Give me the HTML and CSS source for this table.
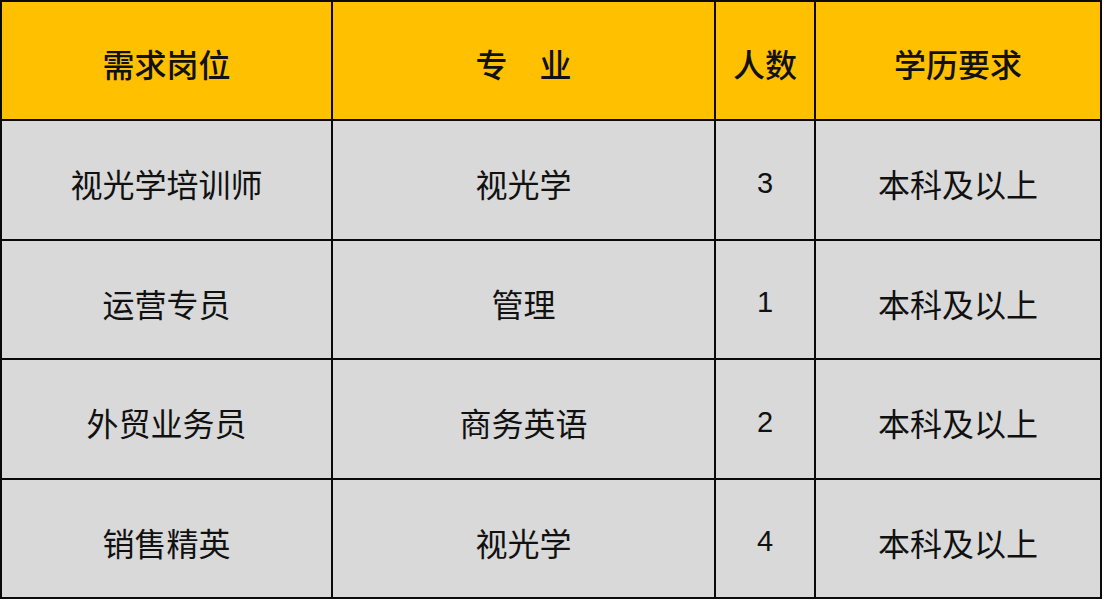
FILE: index.html
```html
<!DOCTYPE html>
<html lang="zh-CN">
<head>
<meta charset="utf-8">
<title>招聘岗位</title>
<link rel="stylesheet" href="styles.css">
</head>
<body>
<div class="table">
  <div class="cell head">需求岗位</div>
  <div class="cell head">专　业</div>
  <div class="cell head">人数</div>
  <div class="cell head">学历要求</div>

  <div class="cell">视光学培训师</div>
  <div class="cell">视光学</div>
  <div class="cell num">3</div>
  <div class="cell">本科及以上</div>

  <div class="cell">运营专员</div>
  <div class="cell">管理</div>
  <div class="cell num">1</div>
  <div class="cell">本科及以上</div>

  <div class="cell">外贸业务员</div>
  <div class="cell">商务英语</div>
  <div class="cell num">2</div>
  <div class="cell">本科及以上</div>

  <div class="cell">销售精英</div>
  <div class="cell">视光学</div>
  <div class="cell num">4</div>
  <div class="cell">本科及以上</div>
</div>
</body>
</html>
```

FILE: styles.css
```css
html, body {
  margin: 0;
  padding: 0;
  background: #ffffff;
}

.table {
  width: 1102px;
  box-sizing: border-box;
  display: grid;
  grid-template-columns: 329px 381px 98px 284px;
  grid-template-rows: 117px 118px 117px 118px 117px;
  gap: 2px;
  padding: 2px;
  background: #0a0a0a;
  font-family: "Noto Sans CJK SC", "Liberation Sans", sans-serif;
}

.cell {
  display: flex;
  align-items: center;
  justify-content: center;
  padding-top: 6px;
  box-sizing: border-box;
  background: #d9d9d9;
  color: #111111;
  font-size: 32px;
  font-weight: 400;
}

.head {
  background: #ffc000;
  font-weight: 500;
  padding-top: 4px;
}

.num {
  font-family: "Liberation Sans", sans-serif;
  font-size: 29px;
}
```
